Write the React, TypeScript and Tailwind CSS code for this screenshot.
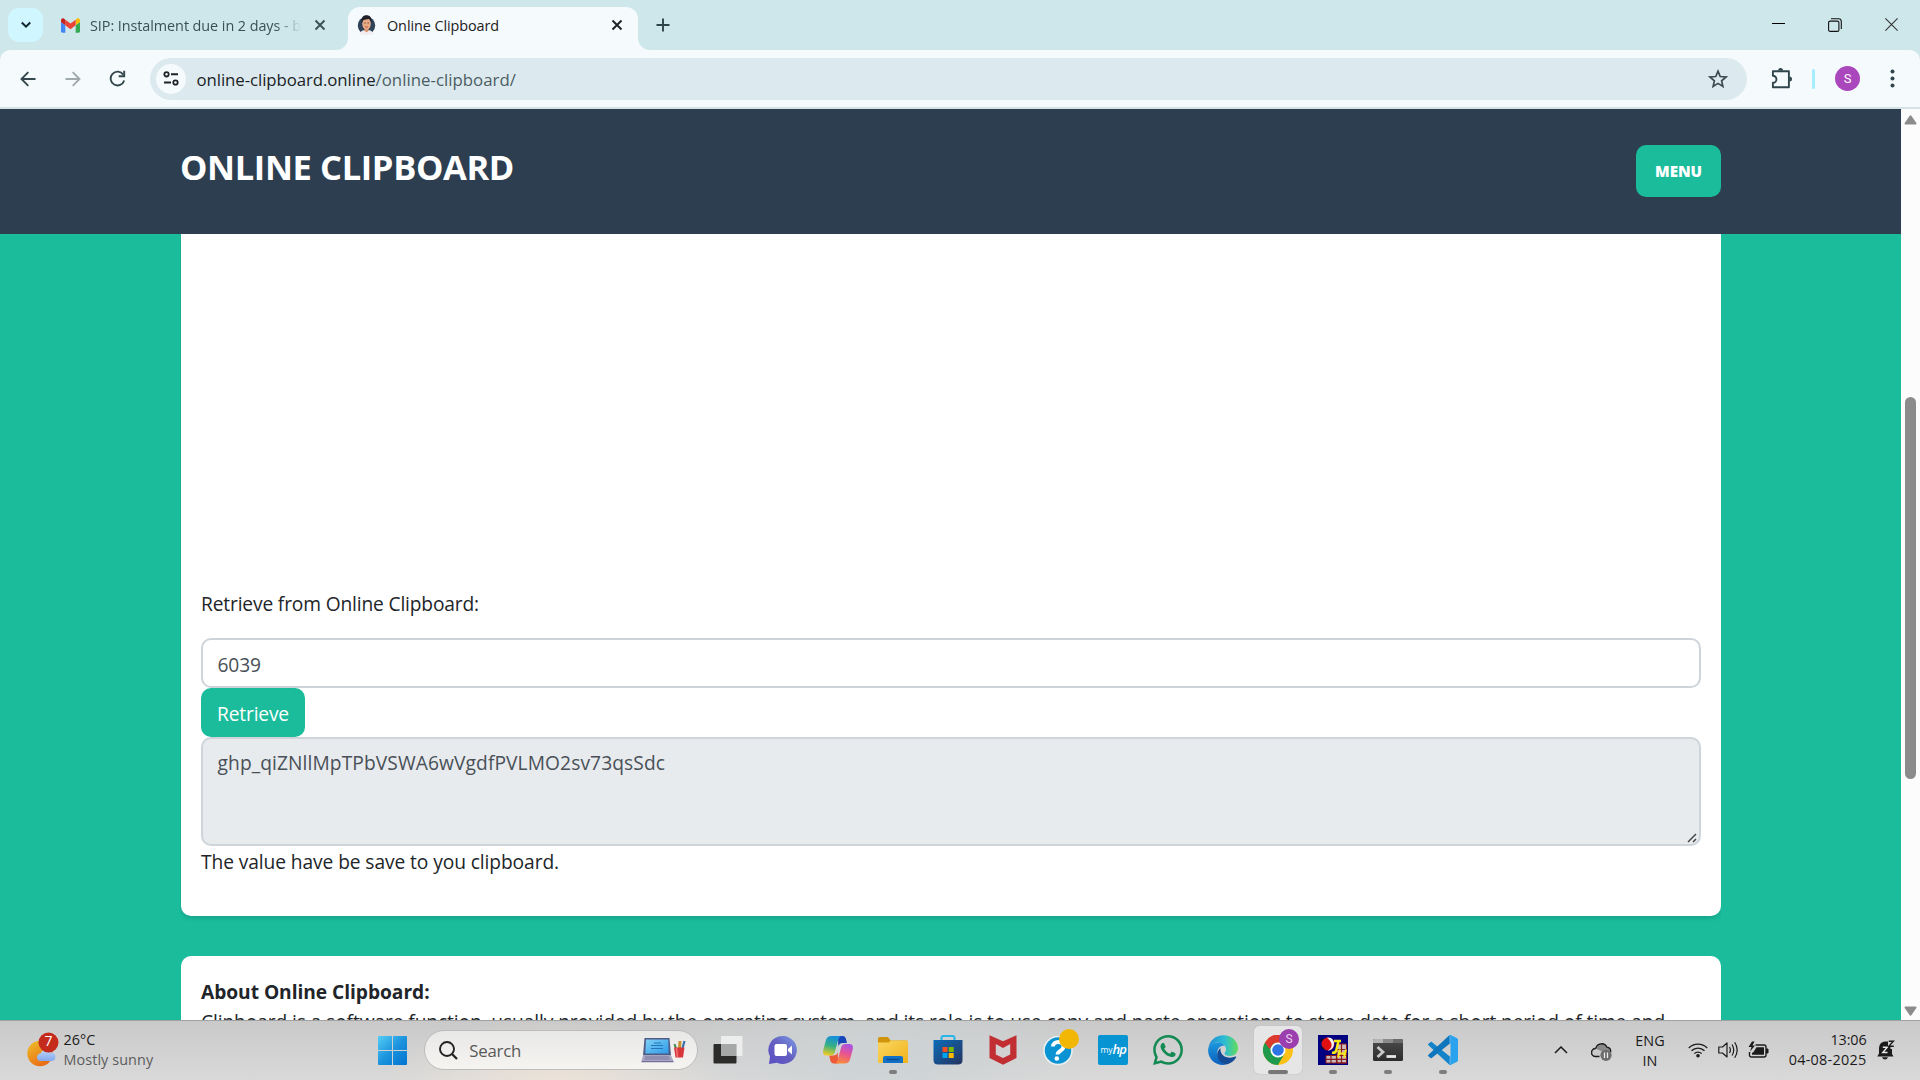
import type { ReactNode } from 'react';

function Svg({ w, h, vb, children, className = '' }: { w: number; h: number; vb?: string; children: ReactNode; className?: string }) {
  return (
    <svg width={w} height={h} viewBox={vb ?? `0 0 ${w} ${h}`} fill="none" className={`block shrink-0 ${className}`}>
      {children}
    </svg>
  );
}

function CloseX({ color }: { color: string }) {
  return (
    <Svg w={12} h={12}>
      <path d="M1.5 1.5l9 9M10.5 1.5l-9 9" stroke={color} strokeWidth="1.9" />
    </Svg>
  );
}

function GmailIcon() {
  return (
    <Svg w={19} h={15} vb="52 42 88 66">
      <path fill="#4285f4" d="M58 108h14V74L52 59v43c0 3.32 2.69 6 6 6" />
      <path fill="#34a853" d="M120 108h14c3.32 0 6-2.69 6-6V59l-20 15" />
      <path fill="#fbbc04" d="M120 48v26l20-15v-8c0-7.42-8.47-11.65-14.4-7.2" />
      <path fill="#ea4335" d="M72 74V48l24 18 24-18v26L96 92" />
      <path fill="#c5221f" d="M52 51v8l20 15V48l-5.6-4.2c-5.94-4.45-14.4-.22-14.4 7.2" />
    </Svg>
  );
}

function FaceIcon() {
  return (
    <Svg w={20} h={20}>
      <circle cx="9.500" cy="10.500" r="8.700" fill="#2e4258" />
      <path d="M2.500 19c1-3.500 4-4 7-4s6 .5 7 4c-2 1.200-12 1.200-14 0z" fill="#f3edf0" />
      <path d="M7.500 12h4v4l-2 1.200-2-1.200z" fill="#d9916d" />
      <ellipse cx="9.500" cy="8.800" rx="4.300" ry="6" fill="#e8ab86" />
      <path d="M4.700 8.500C3.700 2.800 6 .3 9.500.3s6 2.500 4.900 8.200c-.6-3-1.300-4-2.600-4.500-2 .6-4 .4-5 1C5.300 6 5.200 7.500 4.700 8.500z" fill="#20212b" />
      <path d="M7.300 8h1.300M10.500 8h1.300" stroke="#523127" strokeWidth=".9" />
      <path d="M8 12h3" stroke="#b8503f" strokeWidth=".9" />
    </Svg>
  );
}

function TabStrip() {
  return (
    <div className="flex h-[50px] items-stretch bg-[#cee7eb]">
      <div className="ml-2 mt-2 flex h-[34px] w-[35px] items-center justify-center rounded-[11px] bg-[#d0f6ff]">
        <Svg w={12} h={8}>
          <path d="M1.800 1.500L6 5.700l4.200-4.200" stroke="#13262b" strokeWidth="2" />
        </Svg>
      </div>
      <div className="ml-[17.500px] flex h-[50px] w-[269.500px] items-center">
        <GmailIcon />
        <div className="mt-px ml-[10.500px] w-[211px] overflow-hidden whitespace-nowrap text-[14.400px] tracking-[-0.064px] text-[#3b5055] [mask-image:linear-gradient(to_right,black_88%,transparent)]">
          SIP: Instalment due in 2 days - b
        </div>
        <div className="ml-[12.500px]">
          <CloseX color="#3b5055" />
        </div>
      </div>
      <div className="relative ml-[18px] mt-[7px] flex h-[43px] w-[290px] items-center rounded-t-[12px] bg-[#f5fafd] pl-[9px]">
        <Svg w={12} h={12} className="absolute bottom-0 -left-3">
          <path d="M12 0v12H0A12 12 0 0 0 12 0z" fill="#f5fafd" />
        </Svg>
        <Svg w={12} h={12} className="absolute bottom-0 -right-3">
          <path d="M0 0v12h12A12 12 0 0 1 0 0z" fill="#f5fafd" />
        </Svg>
        <div className="-mt-[7px]">
          <FaceIcon />
        </div>
        <div className="-mt-[5px] ml-[10px] w-[224px] text-[14.400px] tracking-[-0.070px] text-[#1c2022]">Online Clipboard</div>
        <div className="-mt-[7px]">
          <CloseX color="#1c2022" />
        </div>
      </div>
      <div className="ml-[18px] flex items-center">
        <Svg w={14} h={14}>
          <path d="M7 .5v13M.5 7h13" stroke="#2f4449" strokeWidth="1.900" />
        </Svg>
      </div>
      <div className="ml-auto flex items-center gap-[43px] pr-[22.500px] [&>svg]:-mt-[1px]">
        <Svg w={13} h={13}>
          <path d="M0 5.500h13" stroke="#000" />
        </Svg>
        <Svg w={14} h={14}>
          <rect x=".6" y="3.100" width="10.300" height="10.300" rx="1.500" stroke="#111" strokeWidth="1.100" />
          <path d="M3 .7h7.500a2.800 2.800 0 0 1 2.800 2.800V11" stroke="#111" strokeWidth="1.100" />
        </Svg>
        <Svg w={13} h={13}>
          <path d="M.4.4l12.200 12.200M12.600.4L.4 12.600" stroke="#333" strokeWidth="1.100" />
        </Svg>
      </div>
    </div>
  );
}

function Toolbar() {
  return (
    <div className="bg-[#cee7eb]">
      <div className="flex h-[59px] items-center rounded-t-[10px] border-b-2 border-[#d5e3e6] bg-[#f5fafd]">
        <Svg w={16} h={16} className="ml-[19.500px]">
          <path d="M15.500 8H1.800M8.300 1.200L1.500 8l6.800 6.800" stroke="#33474d" strokeWidth="1.900" />
        </Svg>
        <Svg w={16} h={16} className="ml-[29px]">
          <path d="M.5 8h13.700M7.700 1.200L14.500 8l-6.800 6.800" stroke="#a0aaad" strokeWidth="1.900" />
        </Svg>
        <Svg w={17} h={17} className="ml-[28.500px]">
          <path d="M14.300 4.600A6.900 6.900 0 1 0 15.200 10.500" stroke="#33474d" strokeWidth="1.900" />
          <path d="M15.200.8v5.500H9.700" stroke="#33474d" strokeWidth="1.900" />
        </Svg>
        <div className="ml-6 flex h-[42px] w-[1597px] items-center rounded-full bg-[#dceaef]">
          <div className="ml-[6px] flex h-[30px] w-[30px] items-center justify-center rounded-full bg-[#f5fafd]">
            <Svg w={17} h={15}>
              <circle cx="3.500" cy="3.300" r="2.200" stroke="#1b2427" strokeWidth="1.800" />
              <path d="M8 3.300h7M1 11.500h7" stroke="#1b2427" strokeWidth="2" />
              <circle cx="12.500" cy="11.500" r="2.200" stroke="#1b2427" strokeWidth="1.800" />
            </Svg>
          </div>
          <div className="mt-[2px] ml-[10.500px] whitespace-nowrap text-[16.800px] tracking-[-0.067px] text-[#1a2225]">
            online-clipboard.online<span className="tracking-[0.030px] text-[#4c5d63]">/online-clipboard/</span>
          </div>
          <Svg w={20} h={20} className="ml-auto mr-[19.500px]">
            <path d="M10 2.200l2.200 5.300 5.800.5-4.400 3.800 1.300 5.600L10 14.400l-4.900 3 1.300-5.600L2 8l5.800-.5z" stroke="#3d4b50" strokeWidth="1.700" />
          </Svg>
        </div>
        <Svg w={22} h={22} className="ml-6 -mt-[1px]">
          <path d="M1.900 4.200h16v16.100H1.900v-4.500a3.500 3.500 0 0 0 0-7.100z" stroke="#2f454b" strokeWidth="1.900" strokeLinejoin="round" />
          <path d="M7 3.600a2.500 2.500 0 0 1 5 0zM18.500 9.500a2.500 2.500 0 0 1 0 5z" fill="#2f454b" />
        </Svg>
        <div className="ml-[19px] h-5 w-[3px] rounded-full bg-[#a5ecfd]" />
        <div className="ml-5 flex h-[25px] w-[25px] items-center justify-center rounded-full bg-[#ab47bc] text-[13px] text-white">
          <span className="font-['Roboto']">S</span>
        </div>
        <Svg w={5} h={19} className="ml-[30px]">
          <circle cx="2.500" cy="2.500" r="2" fill="#2f454b" />
          <circle cx="2.500" cy="9.500" r="2" fill="#2f454b" />
          <circle cx="2.500" cy="16.500" r="2" fill="#2f454b" />
        </Svg>
      </div>
    </div>
  );
}

function WebPage() {
  return (
    <div className="flex w-[1901px] flex-col bg-[#1abc9c]">
      <header className="flex h-[125px] shrink-0 items-start justify-between bg-[#2c3e50] pr-[180px] pl-[180px]">
        <h1 className="mt-[33px] text-[34.500px] leading-[50px] font-bold tracking-[-0.380px] text-white">ONLINE CLIPBOARD</h1>
        <button className="mt-9 h-[52px] w-[85px] rounded-[10px] bg-[#1abc9c] pt-px text-[15.200px] font-extrabold tracking-[-0.100px] text-white">MENU</button>
      </header>
      <main className="mx-[180px] flex flex-1 flex-col overflow-hidden text-[19.200px] leading-[30px] text-[#212529]">
        <section className="ml-px h-[682px] shrink-0 rounded-b-[10px] bg-white px-5 pt-[355px] shadow-[0_2px_5px_rgba(0,0,0,0.14)]">
          <p className="mb-[19px] tracking-[-0.156px]">Retrieve from Online Clipboard:</p>
          <div className="flex h-[50px] items-center rounded-[10px] border-2 border-[#ced4da] bg-white px-[14.500px] pt-[3px] tracking-[-0.100px] text-[#495057]">6039</div>
          <button className="block h-[49px] w-[104px] rounded-[10px] bg-[#1abc9c] pt-[3px] tracking-[-0.159px] text-white">Retrieve</button>
          <div className="relative h-[109px] rounded-[10px] border-2 border-[#ced4da] bg-[#e8ebee] px-[14.500px] pt-[9px] tracking-[0.095px] text-[#495057]">
            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
            <Svg w={10} h={10} className="absolute right-[2px] bottom-px">
              <path d="M1 9l8-8M6 9l3-3" stroke="#444" strokeWidth="1.500" />
            </Svg>
          </div>
          <p className="mt-px tracking-[-0.090px]">The value have be save to you clipboard.</p>
        </section>
        <section className="mt-10 ml-px h-[200px] shrink-0 rounded-[10px] bg-white px-5 pt-[21px]">
          <h2 className="font-bold tracking-[-0.050px]">About Online Clipboard:</h2>
          <p className="whitespace-nowrap tracking-[-0.103px]">
            Clipboard is a software function, usually provided by the operating system, and its role is to use copy and paste operations to store data for a short period of time and
          </p>
        </section>
      </main>
    </div>
  );
}

function Scrollbar() {
  return (
    <div className="flex w-[19px] flex-col items-center bg-[#fcfcfc]">
      <Svg w={13} h={10} className="mt-[6px]">
        <path d="M6.500 1.300L11.500 8.500h-10z" fill="#8b8b8b" stroke="#8b8b8b" strokeWidth="2" strokeLinejoin="round" />
      </Svg>
      <div className="mt-[272px] h-[382px] w-[11px] rounded-full bg-[#8b8b8b]" />
      <Svg w={13} h={10} className="mt-auto mb-1">
        <path d="M6.500 8.700L11.500 1.500h-10z" fill="#8b8b8b" stroke="#8b8b8b" strokeWidth="2" strokeLinejoin="round" />
      </Svg>
    </div>
  );
}

function WeatherIcon() {
  return (
    <Svg w={34} h={36}>
      <defs>
        <linearGradient id="sun" x1="0" y1="0" x2=".6" y2="1">
          <stop stopColor="#eec22c" />
          <stop offset="1" stopColor="#ea6a14" />
        </linearGradient>
        <linearGradient id="cloud" x1="0" y1="0" x2="0" y2="1">
          <stop stopColor="#bcd5fb" />
          <stop offset="1" stopColor="#82a8ec" />
        </linearGradient>
      </defs>
      <circle cx="14" cy="21.500" r="12.700" fill="url(#sun)" />
      <path d="M14 29a3.800 3.800 0 0 1 .6-7.500 6 6 0 0 1 10.900-1 4.300 4.300 0 0 1 .5 8.500z" fill="url(#cloud)" />
      <circle cx="22.500" cy="10.500" r="10" fill="#c42b1c" />
    </Svg>
  );
}

function LaptopIcon() {
  return (
    <Svg w={45} h={26}>
      <defs>
        <linearGradient id="lap" x1="0" y1="0" x2="1" y2="1">
          <stop stopColor="#7fd0f7" />
          <stop offset="1" stopColor="#2f9be6" />
        </linearGradient>
      </defs>
      <path d="M3.500 1h25l1.500 17.500H2z" fill="#4f5b86" />
      <path d="M5 2.500h22.300l.3 14H4.300z" fill="url(#lap)" />
      <path d="M10 8.500h12M10 11.500h12M13 6h7" stroke="#2476b8" strokeWidth="1" />
      <path d="M2 18.500h28l2.500 5.500H.5z" fill="#a9a6c4" />
      <path d="M4 20h24M3.500 22h25" stroke="#7b789e" strokeWidth="1" />
      <path d="M.5 24h32v1.300H.5z" fill="#736f96" />
      <path d="M35.500 13l-2-6" stroke="#3f8b50" strokeWidth="2" />
      <path d="M41 13l2.500-9" stroke="#3a6fb0" strokeWidth="2.200" />
      <path d="M38.500 12l.5-8" stroke="#c9902e" strokeWidth="3" />
      <path d="M33 10.500h10.500L42 20.500h-7.500z" fill="#d9363c" />
      <path d="M35.500 11l1 9" stroke="#f0767a" strokeWidth="1.500" />
    </Svg>
  );
}

function AppIcon({ children, active = false, running = false }: { children: ReactNode; active?: boolean; running?: boolean }) {
  return (
    <div className="relative flex h-[60px] w-[55px] shrink-0 items-center justify-center">
      {active && <div className="absolute inset-x-[3.500px] top-[6px] h-12 rounded-[5px] bg-[#e6e6e6] shadow-[0_0_1px_rgba(0,0,0,0.25)]" />}
      <div className="relative">{children}</div>
      {active && <div className="absolute bottom-[6px] h-[4px] w-5 rounded-full bg-[#777777]" />}
      {running && <div className="absolute bottom-[6px] h-[4px] w-2 rounded-full bg-[#7d7d7d]" />}
    </div>
  );
}

function Apps() {
  return (
    <div className="ml-[2.500px] flex items-center">
      <AppIcon>
        <Svg w={30} h={30}>
          <rect x=".5" y="9" width="23" height="19.500" rx="1" fill="#2c2c2a" />
          <rect x="8" y="1" width="21.500" height="20" rx="1" fill="#f2f2f2" fillOpacity=".85" />
          <rect x="8" y="9" width="15.500" height="12" fill="#a6a8a7" />
        </Svg>
      </AppIcon>
      <AppIcon>
        <Svg w={30} h={30}>
          <defs>
            <linearGradient id="chat" x1="1" y1="0" x2="0" y2="1">
              <stop stopColor="#7b9ce8" />
              <stop offset=".5" stopColor="#655fc0" />
              <stop offset="1" stopColor="#5a4fc4" />
            </linearGradient>
          </defs>
          <path d="M15 1a14 14 0 1 1-6 26.700L1 29l1-7.500A14 14 0 0 1 15 1z" fill="url(#chat)" />
          <rect x="6.500" y="9" width="12.500" height="12" rx="2" fill="#fff" />
          <path d="M20 14l4-3.500v9L20 16z" fill="#fff" />
        </Svg>
      </AppIcon>
      <AppIcon>
        <Svg w={32} h={30}>
          <defs>
            <linearGradient id="cop1" x1=".5" y1="0" x2=".3" y2="1">
              <stop stopColor="#1690dd" />
              <stop offset=".5" stopColor="#35b184" />
              <stop offset="1" stopColor="#f2cc20" />
            </linearGradient>
            <linearGradient id="cop2" x1=".7" y1="0" x2=".4" y2="1">
              <stop stopColor="#a653e6" />
              <stop offset=".5" stopColor="#e9548f" />
              <stop offset="1" stopColor="#f98a3c" />
            </linearGradient>
          </defs>
          <path d="M16 1h4.500c2.500 0 3 1.500 3.600 3.500L25 8h-4c-2.500 0-4 1-4.700 3.500z" fill="#1746b8" />
          <path d="M16 28.500h-4.300c-2 0-3-1.500-3.500-3.500l-1-4.500h4c2.500 0 4-1 4.700-3.500z" fill="#ec5a3a" />
          <path d="M9.500 1H19c-2 1-2.700 3-3.400 6l-2.700 10c-.7 2.500-2 3.500-4.400 3.500H4.300C1 20.500.6 17.500 1.500 14L4 5C5 2 6.500 1 9.500 1z" fill="url(#cop1)" />
          <path d="M22.500 28.500H13c2-1 2.700-3 3.400-6l2.700-10C19.800 10 21.100 9 23.500 9h4.200c3.300 0 3.700 3 2.800 6.500L28 24.500c-1 3-2.500 4-5.500 4z" fill="url(#cop2)" />
        </Svg>
      </AppIcon>
      <AppIcon running>
        <Svg w={30} h={28}>
          <defs>
            <linearGradient id="fold" x1="0" y1="0" x2="1" y2="1">
              <stop stopColor="#fbd75f" />
              <stop offset="1" stopColor="#f0b21c" />
            </linearGradient>
          </defs>
          <path d="M0 2.500Q0 1 1.500 1H10l2.500 3.500H28q2 0 2 2V9H0z" fill="#d0950c" />
          <path d="M0 6.500h10.500L13 4.500h15q2 0 2 1.500v20q0 1-1 1H1q-1 0-1-1z" fill="url(#fold)" />
          <path d="M5 27v-5q0-2 2-2h16q2 0 2 2v5z" fill="#1271c4" />
          <path d="M8.500 23.500h13" stroke="#0b4e91" strokeWidth="1.500" />
        </Svg>
      </AppIcon>
      <AppIcon>
        <Svg w={30} h={30}>
          <defs>
            <linearGradient id="store" x1="0" y1="0" x2="1" y2="1">
              <stop stopColor="#0b6bb8" />
              <stop offset="1" stopColor="#26345f" />
            </linearGradient>
          </defs>
          <path d="M8.500 6V3q0-2 2-2h9q2 0 2 2v3" stroke="#27b6e8" strokeWidth="2" />
          <path d="M.5 5h29v20q0 4.500-4.500 4.500H5Q.5 29.500.5 25z" fill="url(#store)" />
          <path d="M9.500 12h5v5h-5z" fill="#f25022" />
          <path d="M15.700 12h5v5h-5z" fill="#7fba00" />
          <path d="M9.500 18h5v5h-5z" fill="#00a4ef" />
          <path d="M15.700 18h5v5h-5z" fill="#ffb900" />
        </Svg>
      </AppIcon>
      <AppIcon>
        <Svg w={28} h={30}>
          <path d="M.5.300L14 6.300l13.500-6V23L14 29.800.5 23z" fill="#c22f33" />
          <path d="M6.800 9L14 13l7.200-4v10.500L14 23l-7.200-3.500z" fill="#d2d2d2" />
        </Svg>
      </AppIcon>
      <AppIcon>
        <Svg w={36} h={36} className="overflow-visible">
          <circle cx="18" cy="18.500" r="14.800" fill="#e9eff2" />
          <circle cx="18" cy="18.500" r="13.200" fill="#0a93d2" />
          <path d="M13 14.500c0-6 10.500-6 10.500 0 0 4.500-6 4-6 8" stroke="#fff" strokeWidth="3.800" />
          <circle cx="16.800" cy="26.500" r="2.300" fill="#fff" />
          <circle cx="29" cy="7" r="10" fill="#f2b705" />
        </Svg>
      </AppIcon>
      <AppIcon>
        <div className="flex h-[30px] w-[30px] items-center justify-center rounded-[2px] bg-[#0794d3] font-['Open_Sans'] leading-none text-white">
          <span className="text-[8.500px] font-medium">my</span>
          <span className="-mt-px text-[13px] font-semibold tracking-[-1px] italic">hp</span>
        </div>
      </AppIcon>
      <AppIcon>
        <Svg w={30} h={30} vb="0 0 24 24">
          <path
            fill="#128a52"
            d="M17.472 14.382c-.297-.149-1.758-.867-2.030-.967-.273-.099-.471-.148-.67.150-.197.297-.767.966-.940 1.164-.173.199-.347.223-.644.075-.297-.150-1.255-.463-2.390-1.475-.883-.788-1.480-1.761-1.653-2.059-.173-.297-.018-.458.130-.606.134-.133.298-.347.446-.520.149-.174.198-.298.298-.497.099-.198.050-.371-.025-.520-.075-.149-.669-1.612-.916-2.207-.242-.579-.487-.5-.669-.510-.173-.008-.371-.010-.570-.010-.198 0-.520.074-.792.372-.272.297-1.040 1.016-1.040 2.479 0 1.462 1.065 2.875 1.213 3.074.149.198 2.096 3.200 5.077 4.487.709.306 1.262.489 1.694.625.712.227 1.360.195 1.871.118.571-.085 1.758-.719 2.006-1.413.248-.694.248-1.289.173-1.413-.074-.124-.272-.198-.570-.347m-5.421 7.403h-.004a9.870 9.870 0 0 1-5.031-1.378l-.361-.214-3.741.982.998-3.648-.235-.374a9.860 9.860 0 0 1-1.510-5.260c.001-5.450 4.436-9.884 9.888-9.884 2.640 0 5.122 1.030 6.988 2.898a9.825 9.825 0 0 1 2.893 6.994c-.003 5.450-4.437 9.884-9.885 9.884m8.413-18.297A11.815 11.815 0 0 0 12.050 0C5.495 0 .160 5.335.157 11.892c0 2.096.547 4.142 1.588 5.945L.057 24l6.305-1.654a11.882 11.882 0 0 0 5.683 1.448h.005c6.554 0 11.890-5.335 11.893-11.893a11.821 11.821 0 0 0-3.480-8.413z"
          />
        </Svg>
      </AppIcon>
      <AppIcon>
        <Svg w={30} h={30}>
          <defs>
            <linearGradient id="ed1" x1="0" y1=".3" x2="1" y2=".3">
              <stop stopColor="#2089d8" />
              <stop offset=".55" stopColor="#2bbcd3" />
              <stop offset="1" stopColor="#63dd5a" />
            </linearGradient>
            <linearGradient id="ed2" x1="0" y1="0" x2="0" y2="1">
              <stop stopColor="#1b97dc" />
              <stop offset="1" stopColor="#0c5fbd" />
            </linearGradient>
          </defs>
          <path d="M.2 13.500C1.500 5.500 7.500.2 15.300.2 24 .2 30 6.500 30 13c0 5-3.500 8-8 8-3.500 0-5.500-1.300-5.500-2.500 0-.9 1.500-1.500 1.500-4 0-4-4-7-8.500-7-4.300 0-8 2.500-9.300 6z" fill="url(#ed1)" />
          <path d="M.1 14.500C.8 10 5 7.500 9.500 7.500c3 0 5.500 1.200 7 3-5 0-8 4-7 9 1 5 4.500 9 9 10-1.200.4-2.300.4-3.500.4C6.500 29.900-.3 23 .1 14.500z" fill="url(#ed2)" />
          <path d="M12.500 13c-2.500 2-3.800 5-3 8.500 1 4.500 5 8 10 7.800 4-1.300 7-4 8.700-7 .3-.7-.1-1-.7-.7-3 1.400-6.500 1.500-9.500.4-4-1.400-6-5-5.500-9z" fill="#134b95" />
        </Svg>
      </AppIcon>
      <AppIcon active>
        <Svg w={30} h={30} vb="0 0 48 48">
          <circle cx="24" cy="24" r="24" fill="#fbc116" />
          <path d="M24 24L3.200 12A24 24 0 0 1 44.800 12H24z" fill="#dc3a2e" />
          <path d="M3.200 12A24 24 0 0 0 24 48l10.400-18L24 24z" fill="#1f9a4c" />
          <path d="M3.200 12L13.600 30 24 24V12z" fill="#1f9a4c" />
          <path d="M3.200 12A24 24 0 0 1 44.800 12H24a12 12 0 0 0-11.500 8.500L10 22z" fill="#dc3a2e" />
          <circle cx="24" cy="24" r="12" fill="#fff" />
          <circle cx="24" cy="24" r="9.300" fill="#2f74e4" />
        </Svg>
        <div className="absolute -top-[6px] left-[16px] flex h-5 w-5 items-center justify-center rounded-full bg-[#9c3fae] font-['Roboto'] text-[12px] text-[#e9d2ee]">S</div>
      </AppIcon>
      <AppIcon running>
        <Svg w={30} h={30}>
          <path d="M0 0h30v30H0z" fill="#000080" />
          <path d="M8 20.500h20.500V28H8zM19 9h9.500v19H19z" fill="#c9bcbc" stroke="#8c1a1a" />
          <path d="M8 24.300h20.500M13 20.500V28M18.500 20.500V28M23.500 9v19M19 14.500h9.500" stroke="#8c1a1a" strokeWidth="1.200" />
          <circle cx="10" cy="9" r="6.500" fill="#e01010" />
          <path d="M9 2.500c5-.5 7.500 3 7 7-.5 3.500-3 6-6 6 3-2 4-4 3.500-6.500S11 4.500 9 2.500z" fill="#eee" />
          <path d="M5 3.500L2.500 6M6 14l-2.500-2" stroke="#111" strokeWidth="1.500" />
          <path d="M16 6h7M20.500 6l-2.300 9.500q-1 3-4.200 2" stroke="#f7ea12" strokeWidth="2.500" />
          <path d="M22 14.500l-2 8M28 14.500l-2 8M20.500 18.500h7" stroke="#f7ea12" strokeWidth="2" />
        </Svg>
      </AppIcon>
      <AppIcon running>
        <Svg w={30} h={22}>
          <defs>
            <linearGradient id="term" x1="0" y1="0" x2="0" y2="1">
              <stop stopColor="#4b4b4b" />
              <stop offset="1" stopColor="#2c2c2c" />
            </linearGradient>
          </defs>
          <rect width="30" height="22" rx="1.500" fill="url(#term)" />
          <path d="M1.500 0H10v4H0V1.500Q0 0 1.500 0z" fill="#b5b5b5" />
          <path d="M10 0h10v4H10z" fill="#8a8a8a" />
          <path d="M20 0h8.500Q30 0 30 1.500V4H20z" fill="#6a6a6a" />
          <path d="M4.500 8l5.500 5-5.500 5" stroke="#c8c8c8" strokeWidth="2.800" />
          <path d="M13.500 17.500H23" stroke="#e6e6e6" strokeWidth="2.800" />
        </Svg>
      </AppIcon>
      <AppIcon running>
        <Svg w={30} h={30} vb="0 0 100 100">
          <path d="M73 72L12.500 23.700q-2.500-1.800-5 .2l-6 5.500q-2.700 2.500 0 5L71 99.300z" fill="#1583ca" />
          <path d="M73 28L12.500 76.300q-2.500 1.800-5-.2l-6-5.500q-2.700-2.500 0-5L71 .7z" fill="#0f75bd" />
          <path d="M71 .7q3-1.200 6 .3l20 9.800q3 1.500 3 5v68.400q0 3.500-3 5L77 99q-3 1.500-6 .3l4-4.300V5z" fill="#2aa3ee" />
          <path d="M71 .7Q75 .5 75 5v22L71 31zM71 99.300Q75 99.500 75 95V73l-4-4z" fill="#2397e4" />
        </Svg>
      </AppIcon>
    </div>
  );
}

function Tray() {
  return (
    <div className="ml-auto flex h-full items-center pr-[25.500px] text-[14.400px] leading-5 text-[#1b1b1b]">
      <Svg w={14} h={8} className="mr-[23px]">
        <path d="M1 7l6-6 6 6" stroke="#1b1b1b" strokeWidth="1.500" />
      </Svg>
      <Svg w={21} h={19} className="mt-[2px] mr-[23.500px]">
        <path d="M4.500 14.500a4 4 0 0 1 .2-8A6 6 0 0 1 16 5.200a4.600 4.600 0 0 1 3.700 5" fill="#8a8a8a" stroke="#1b1b1b" strokeWidth="1.300" />
        <path d="M4.500 14.500a4 4 0 0 1 0-8l9 4-5 4z" fill="#c9c9c9" />
        <path d="M8.500 14.500h-4a4 4 0 0 1 .2-8" stroke="#1b1b1b" strokeWidth="1.300" />
        <circle cx="15" cy="13.300" r="5.600" fill="#6e6e6e" />
        <path d="M13.500 10.500v5.600M16.500 10.500v5.600" stroke="#eee" strokeWidth="1.200" />
      </Svg>
      <div className="mt-px mr-[22.500px] w-[30px] text-center whitespace-nowrap">
        <div>ENG</div>
        <div>IN</div>
      </div>
      <Svg w={20} h={16} className="mr-[10px]">
        <path d="M.8 6a13 13 0 0 1 18.400 0M3.500 8.800a9.200 9.200 0 0 1 13 0M6.300 11.600a5.300 5.300 0 0 1 7.400 0" stroke="#1b1b1b" strokeWidth="1.300" />
        <circle cx="10" cy="13.800" r="1.800" fill="#1b1b1b" />
      </Svg>
      <Svg w={21} h={18} className="mr-[9px]">
        <path d="M.8 6h3.700L9 2v14l-4.500-4H.8z" stroke="#1b1b1b" strokeWidth="1.200" strokeLinejoin="round" />
        <path d="M11.500 6q1.800 3 0 6M14 3.500q3.500 5.500 0 11M16.700 1.200q5 7.800 0 15.600" stroke="#1b1b1b" strokeWidth="1.200" />
      </Svg>
      <Svg w={21} h={18} className="mr-[20px]">
        <path d="M7.500 4H16q2 0 2 2v8q0 2-2 2H3.500q-2 0-2-2v-3" stroke="#1b1b1b" strokeWidth="1.400" />
        <path d="M8.500 6.200h7.500v7.600H4V12l1.500-1z" fill="#1b1b1b" />
        <path d="M18.500 8h1.500v4h-1.500z" fill="#1b1b1b" stroke="#1b1b1b" />
        <path d="M4 .5L.5 6h3L2 10.500l5-6H4.500L6.500.5z" fill="#1b1b1b" />
      </Svg>
      <div className="mr-[10px] w-[78px] text-right">
        <div className="tracking-[-0.139px]">13:06</div>
        <div className="tracking-[0.270px] whitespace-nowrap">04-08-2025</div>
      </div>
      <Svg w={18} h={20}>
        <path d="M2 8A6.200 6.200 0 0 1 8.500 1.500h5V9H15v5l1.500 2.500H.3L2 13.500z" fill="#1b1b1b" />
        <path d="M5 17.300h6q-.8 2.300-3 2.300t-3-2.300z" fill="#1b1b1b" />
        <path d="M5.800 7.300h4.500L5.800 12.500h4.700" stroke="#e8e8e8" strokeWidth="1.400" />
        <path d="M11 1h6v5.500h-6z" fill="#d2d2d2" />
        <path d="M11.800 1.200h4.600L11.800 6.300h5" stroke="#1b1b1b" strokeWidth="1.400" />
      </Svg>
    </div>
  );
}

function Taskbar() {
  return (
    <footer className="flex h-[60px] shrink-0 items-center bg-[#d3d3d3] bg-[radial-gradient(ellipse_170px_60px_at_555px_60px,#f0e5d8cc,transparent),radial-gradient(ellipse_200px_80px_at_880px_40px,#cdd3d5,transparent),linear-gradient(#c9c9c9,#d9d9d9)] shadow-[inset_0_1px_0_#a2a2a2]">
      <div className="relative ml-[26px] flex items-center">
        <WeatherIcon />
        <span className="absolute top-0 left-[12.500px] flex h-5 w-5 items-center justify-center font-['Open_Sans'] text-[14px] text-white">7</span>
        <div className="ml-[3.500px] text-[14.400px] leading-5 tracking-[0.080px] whitespace-nowrap">
          <div className="text-[#1b1b1b]">26°C</div>
          <div className="text-[#5c5c5c]">Mostly sunny</div>
        </div>
      </div>
      <div className="ml-[225px]">
        <Svg w={29} h={29}>
          <defs>
            <linearGradient id="win" x1="0" y1="0" x2="1" y2="1">
              <stop stopColor="#54cdf4" />
              <stop offset=".5" stopColor="#1c93dd" />
              <stop offset="1" stopColor="#0073d0" />
            </linearGradient>
          </defs>
          <path d="M1 0h13v14H0V1q0-1 1-1zM15 0h13q1 0 1 1v13H15zM0 15h14v14H1q-1 0-1-1zM15 15h14v13q0 1-1 1H15z" fill="url(#win)" />
        </Svg>
      </div>
      <div className="ml-[17px] flex h-10 w-[274px] items-center rounded-full border border-[#bcbcbc] bg-linear-to-b from-[#e8e8e7] to-[#f6f4f1] pl-[13.500px]">
        <Svg w={19} h={19}>
          <circle cx="8" cy="8" r="7" stroke="#222" strokeWidth="1.900" />
          <path d="M13 13l5 5" stroke="#222" strokeWidth="2.300" />
        </Svg>
        <span className="mt-px ml-[11.500px] text-[16.800px] tracking-[-0.190px] text-[#585858]">Search</span>
        <div className="mr-[11.500px] ml-auto">
          <LaptopIcon />
        </div>
      </div>
      <Apps />
      <Tray />
    </footer>
  );
}

export default function App() {
  return (
    <div className="flex h-[1080px] w-[1920px] flex-col overflow-hidden font-['Open_Sans','Noto_Sans',sans-serif]">
      <TabStrip />
      <Toolbar />
      <div className="flex min-h-0 flex-1">
        <WebPage />
        <Scrollbar />
      </div>
      <Taskbar />
    </div>
  );
}
